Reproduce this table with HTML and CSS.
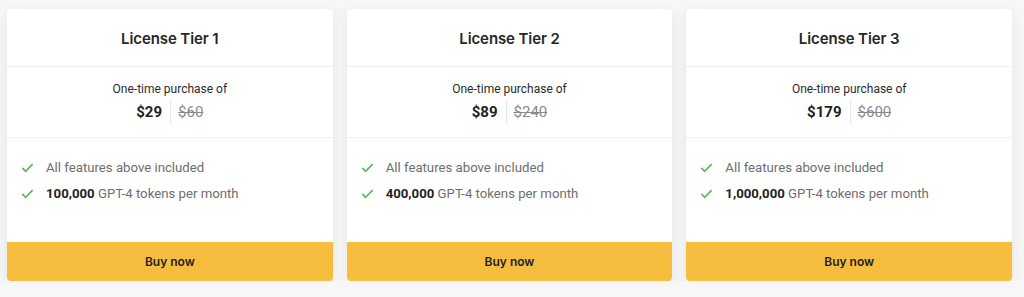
FILE: index.html
```html
<!DOCTYPE html>
<html lang="en">
<head>
  <meta charset="UTF-8" />
  <meta name="viewport" content="width=device-width, initial-scale=1.0" />
  <title>License Tiers</title>
  <link rel="stylesheet" href="styles.css">
</head>
<body>
  <div class="tiers">
    <div class="tier">
      <div class="tier-head">License Tier 1</div>
      <div class="tier-price">
        <div class="price-label">One-time purchase of</div>
        <div class="price-row"><span class="price-now">$29</span><span class="price-old">$60</span></div>
      </div>
      <ul class="tier-features">
        <li><svg viewBox="0 0 16 16"><path d="M2.5 8.5L6 12L13.5 4.5"/></svg>All features above included</li>
        <li><svg viewBox="0 0 16 16"><path d="M2.5 8.5L6 12L13.5 4.5"/></svg><b>100,000</b>&nbsp;GPT-4 tokens per month</li>
      </ul>
      <button class="buy-btn">Buy now</button>
    </div>
    <div class="tier">
      <div class="tier-head">License Tier 2</div>
      <div class="tier-price">
        <div class="price-label">One-time purchase of</div>
        <div class="price-row"><span class="price-now">$89</span><span class="price-old">$240</span></div>
      </div>
      <ul class="tier-features">
        <li><svg viewBox="0 0 16 16"><path d="M2.5 8.5L6 12L13.5 4.5"/></svg>All features above included</li>
        <li><svg viewBox="0 0 16 16"><path d="M2.5 8.5L6 12L13.5 4.5"/></svg><b>400,000</b>&nbsp;GPT-4 tokens per month</li>
      </ul>
      <button class="buy-btn">Buy now</button>
    </div>
    <div class="tier">
      <div class="tier-head">License Tier 3</div>
      <div class="tier-price">
        <div class="price-label">One-time purchase of</div>
        <div class="price-row"><span class="price-now">$179</span><span class="price-old">$600</span></div>
      </div>
      <ul class="tier-features">
        <li><svg viewBox="0 0 16 16"><path d="M2.5 8.5L6 12L13.5 4.5"/></svg>All features above included</li>
        <li><svg viewBox="0 0 16 16"><path d="M2.5 8.5L6 12L13.5 4.5"/></svg><b>1,000,000</b>&nbsp;GPT-4 tokens per month</li>
      </ul>
      <button class="buy-btn">Buy now</button>
    </div>
  </div>
</body>
</html>
```
FILE: styles.css
```css
* { box-sizing: border-box; }
body {
  margin: 0;
  padding: 9px 12px 0 7px;
  background: #f7f7f7;
  font-family: Roboto, 'Liberation Sans', sans-serif;
  color: #222;
}
.tiers {
  display: flex;
  gap: 14px;
}
.tier {
  flex: 1;
  background: #fff;
  border-radius: 4px;
  box-shadow: 0 4px 14px rgba(0, 0, 0, 0.08);
  display: flex;
  flex-direction: column;
  height: 272px;
}
.tier-head {
  height: 58px;
  display: flex;
  align-items: center;
  justify-content: center;
  font-family: Inter, Roboto, sans-serif;
  font-weight: 600;
  font-size: 15px;
  letter-spacing: -0.1px;
  color: #262626;
  border-bottom: 1px solid #eeeeee;
  padding-top: 1px;
}
.tier-price {
  height: 71px;
  display: flex;
  flex-direction: column;
  align-items: center;
  justify-content: center;
  border-bottom: 1px solid #eeeeee;
  padding-bottom: 1px;
}
.price-label {
  font-size: 12px;
  color: #2b2b2b;
  margin-bottom: 5px;
  margin-top: 1px;
}
.price-row {
  display: flex;
  align-items: center;
  font-size: 15px;
}
.price-now {
  font-weight: 700;
  color: #222;
  padding-right: 8px;
  border-right: 1px solid #e6e6e6;
  line-height: 22px;
}
.price-old {
  color: #8a8a8a;
  text-decoration: line-through;
  padding-left: 7px;
  line-height: 22px;
}
.tier-features {
  list-style: none;
  margin: 0;
  padding: 16px 13px 0;
  flex: 1;
}
.tier-features li {
  display: flex;
  align-items: center;
  font-size: 13.2px;
  color: #6e6e6e;
  height: 26px;
}
.tier-features li b {
  color: #222;
  font-weight: 700;
}
.tier-features svg {
  width: 15px;
  height: 15px;
  fill: none;
  stroke: #5cb85c;
  stroke-width: 1.8;
  margin-right: 11px;
  flex-shrink: 0;
}
.buy-btn {
  height: 39px;
  border: none;
  border-radius: 0 0 4px 4px;
  background: #f6bd3f;
  font-family: Inter, Roboto, sans-serif;
  font-weight: 600;
  font-size: 12px;
  color: #1e1e1e;
  cursor: pointer;
}
```
